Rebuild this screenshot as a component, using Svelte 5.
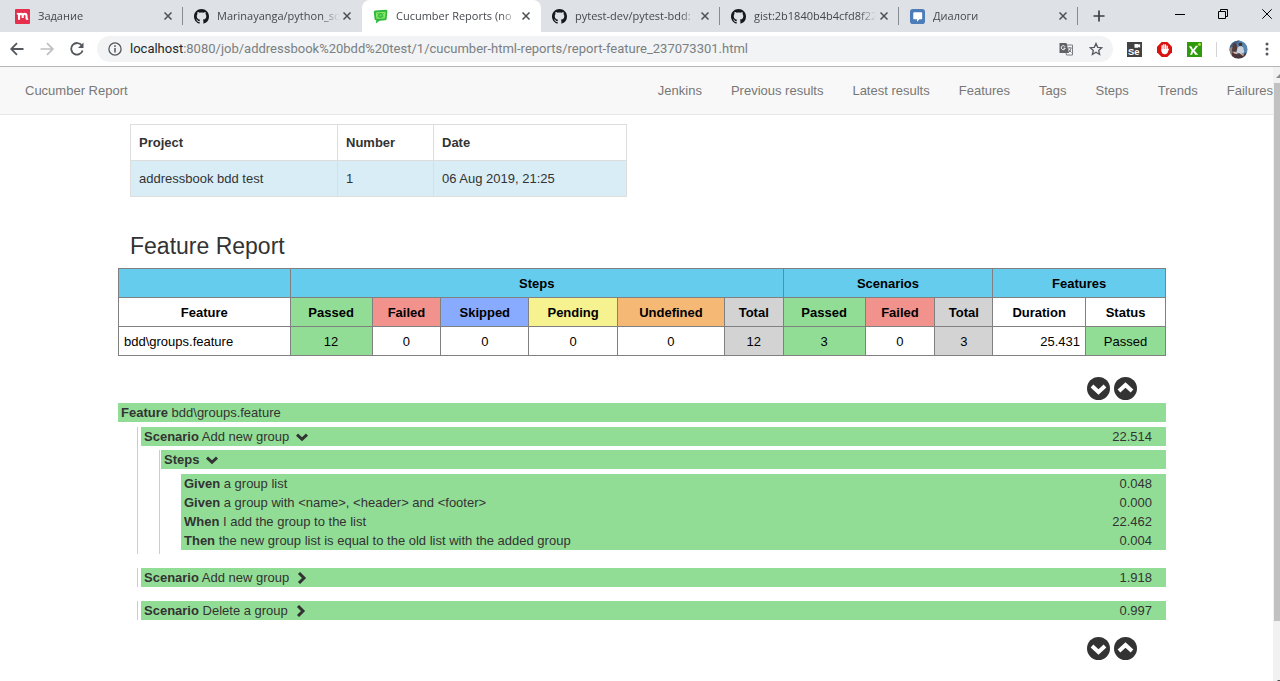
<script>
  const tabs = [
    { title: 'Задание', icon: 'miro' },
    { title: 'Marinayanga/python_sc', icon: 'github' },
    { title: 'Cucumber Reports (no', icon: 'cucumber', active: true },
    { title: 'pytest-dev/pytest-bdd:', icon: 'github' },
    { title: 'gist:2b1840b4b4cfd8f22', icon: 'github' },
    { title: 'Диалоги', icon: 'chat' }
  ];
  const links = ['Jenkins', 'Previous results', 'Latest results', 'Features', 'Tags', 'Steps', 'Trends', 'Failures'];
  const columns = [
    { label: 'Feature', value: 'bdd\\groups.feature', size: 172, align: 'left' },
    { label: 'Passed', value: '12', size: 82, head: 'passed', cell: 'passed' },
    { label: 'Failed', value: '0', size: 69, head: 'failed' },
    { label: 'Skipped', value: '0', size: 88, head: 'skipped' },
    { label: 'Pending', value: '0', size: 89, head: 'pending' },
    { label: 'Undefined', value: '0', size: 107, head: 'undefined' },
    { label: 'Total', value: '12', size: 59, head: 'total', cell: 'total' },
    { label: 'Passed', value: '3', size: 82, head: 'passed', cell: 'passed' },
    { label: 'Failed', value: '0', size: 70, head: 'failed' },
    { label: 'Total', value: '3', size: 58, head: 'total', cell: 'total' },
    { label: 'Duration', value: '25.431', size: 93, align: 'right' },
    { label: 'Status', value: 'Passed', size: 80, cell: 'passed' }
  ];
  const sum = columns.reduce((t, c) => t + c.size, 0);
  let scenarios = $state([
    {
      name: 'Add new group', time: '22.514', open: true, stepsOpen: true,
      steps: [
        ['Given', 'a group list', '0.048'],
        ['Given', 'a group with <name>, <header> and <footer>', '0.000'],
        ['When', 'I add the group to the list', '22.462'],
        ['Then', 'the new group list is equal to the old list with the added group', '0.004']
      ]
    },
    { name: 'Add new group', time: '1.918', open: false, stepsOpen: true, steps: [] },
    { name: 'Delete a group', time: '0.997', open: false, stepsOpen: true, steps: [] }
  ]);
  function setAll(open) {
    for (const s of scenarios) s.open = open;
  }
</script>

{#snippet chevron(open)}
  <svg class="chev" viewBox="0 0 12 12" aria-hidden="true">
    {#if open}
      <path d="M1 3.700 6 8.300 11 3.700" />
    {:else}
      <path d="M3 1 8 6 3 11" />
    {/if}
  </svg>
{/snippet}

{#snippet toggles()}
  <div class="toggles">
    <button aria-label="Expand all" onclick={() => setAll(true)}>
      <svg viewBox="0 0 23 23"><circle cx="11.5" cy="11.5" r="11.5" fill="#333" /><path d="M5 9 11.5 15 18 9" /></svg>
    </button>
    <button aria-label="Collapse all" onclick={() => setAll(false)}>
      <svg viewBox="0 0 23 23"><circle cx="11.5" cy="11.5" r="11.5" fill="#333" /><path d="M5 14 11.5 8 18 14" /></svg>
    </button>
  </div>
{/snippet}

<div class="window">
  <div class="strip">
    {#each tabs as tab}
      <div class="tab" class:active={tab.active}>
        {#if tab.icon === 'github'}
          <svg class="fav" viewBox="0 0 16 16"><path d="M8 0C3.58 0 0 3.58 0 8c0 3.54 2.29 6.53 5.47 7.59.4.07.55-.17.55-.38 0-.19-.01-.82-.01-1.49-2.01.37-2.53-.49-2.69-.94-.09-.23-.48-.94-.82-1.13-.28-.15-.68-.52-.01-.53.63-.01 1.08.58 1.23.82.72 1.21 1.87.87 2.33.66.07-.52.28-.87.51-1.07-1.78-.2-3.64-.89-3.64-3.95 0-.87.31-1.59.82-2.15-.08-.2-.36-1.02.08-2.12 0 0 .67-.21 2.2.82.64-.18 1.32-.27 2-.27s1.36.09 2 .27c1.53-1.04 2.2-.82 2.2-.82.44 1.1.16 1.92.08 2.12.51.56.82 1.27.82 2.15 0 3.07-1.87 3.75-3.65 3.95.29.25.54.73.54 1.48 0 1.07-.01 1.93-.01 2.2 0 .21.15.46.55.38A8.01 8.01 0 0 0 16 8c0-4.42-3.58-8-8-8z" fill="#15181c" /></svg>
        {:else if tab.icon === 'miro'}
          <svg class="fav" viewBox="0 0 16 16"><rect width="16" height="16" rx="1" fill="#e62e4d" /><path d="M2.200 5.500Q4.200 4.300 4.300 6.500V11.500M4.300 7.500Q4.500 5.200 6.300 5.200Q8.200 5.200 8.200 7.500V9.500M8.200 7.500Q8.500 5.200 10.300 5.200Q12.300 5.200 12.300 7.500V9.500Q12.300 11 14 10.300" fill="none" stroke="#fff" stroke-width="2.200" /></svg>
        {:else if tab.icon === 'cucumber'}
          <svg class="fav" viewBox="0 0 16 16"><path d="M2.500 1.500 14 .800Q15.500 1 15.300 2.500L14.500 11Q14 12 13 12L7 12.500 3 15.500 3.500 12 1.800 11.500.800 3Q.800 1.700 2.500 1.500Z" fill="#2db83c" /><path d="M3 3.500 13.500 3 12.800 10 3.500 10.500Z" fill="#8be868" /><circle cx="8" cy="6.700" r="2.800" fill="#36bd42" /><circle cx="8" cy="6.700" r="1.200" fill="#6fde56" /><path d="M4 4l1 1M12 4l-1 1M4 9l1-1M12 9l-1-1" stroke="#27b43c" /></svg>
        {:else}
          <svg class="fav" viewBox="0 0 16 16"><rect width="16" height="16" rx="3" fill="#4d7db8" /><path d="M4.500 3.500H12Q13 3.500 13 4.500V10Q13 11 12 11H10L7.500 13.500V11H4.500Q3.500 11 3.500 10V4.500Q3.500 3.500 4.500 3.500Z" fill="#fff" /></svg>
        {/if}
        <span class="title">{tab.title}</span>
        <button class="close" aria-label="Close tab"><svg viewBox="0 0 8 8"><path d="M.5.5 7.500 7.500M7.500.5.5 7.500" stroke="#4c4f54" stroke-width="1.500" /></svg></button>
      </div>
    {/each}
    <button class="plus" aria-label="New tab"><svg viewBox="0 0 12 12"><path d="M6 .5v11M.5 6h11" stroke="#3c4043" stroke-width="1.700" /></svg></button>
    <div class="controls">
      <button aria-label="Minimize"><svg viewBox="0 0 10 10"><path d="M0 5.500h10" stroke="#000" /></svg></button>
      <button aria-label="Restore"><svg viewBox="0 0 10 10"><path d="M.5 2.500h7v7h-7zM2.500 2.500v-2h7v7h-2" fill="none" stroke="#000" /></svg></button>
      <button aria-label="Close window"><svg viewBox="0 0 10 10"><path d="M.3.3l9.400 9.400M9.700.3.3 9.700" stroke="#000" /></svg></button>
    </div>
  </div>

  <div class="toolbar">
    <div class="history">
      <button aria-label="Back"><svg viewBox="0 0 14 14"><path d="M13.500 7H1.500M7 1.200 1.200 7 7 12.800" fill="none" stroke="#54585d" stroke-width="1.800" /></svg></button>
      <button aria-label="Forward"><svg viewBox="0 0 14 14"><path d="M.5 7h12M7 1.200 12.800 7 7 12.800" fill="none" stroke="#bcbec1" stroke-width="1.700" /></svg></button>
      <button aria-label="Reload"><svg viewBox="0 0 14 14"><path d="M11.800 3.500A5.800 5.800 0 1 0 12.600 8.500" fill="none" stroke="#54585d" stroke-width="1.800" /><path d="M13.500.5V6H8z" fill="#54585d" /></svg></button>
    </div>
    <div class="omnibox">
      <svg class="info" viewBox="0 0 14 14"><circle cx="7" cy="7" r="6.100" fill="none" stroke="#54585d" stroke-width="1.300" /><path d="M7 6v4.500M7 3.300v1.600" stroke="#54585d" stroke-width="1.500" /></svg>
      <span class="url"><b>localhost</b>:8080/job/addressbook%20bdd%20test/1/cucumber-html-reports/report-feature_237073301.html</span>
      <button aria-label="Translate"><svg viewBox="0 0 14 14"><path d="M5 3h8.500v10H7.500z" fill="#f5f6f7" stroke="#7a7d81" /><path d="M.5 1H7.500L10 11H.5z" fill="#5f6368" /><path d="M6 4.700A2 2 0 1 0 6.200 6.200H4.500" fill="none" stroke="#fff" /><path d="M8.800 6h4M10.800 5v1M12 6.500Q11.500 9 9.800 10.300M9.500 7.500l3 3" fill="none" stroke="#74777b" /></svg></button>
      <button aria-label="Bookmark"><svg viewBox="0 0 14 14"><path d="M7 1.500 8.700 5.300 12.800 5.700 9.700 8.400 10.600 12.500 7 10.300 3.400 12.500 4.300 8.400 1.200 5.700 5.300 5.300Z" fill="none" stroke="#54585d" stroke-width="1.300" /></svg></button>
    </div>
    <div class="extensions">
      <button aria-label="Selenium"><svg viewBox="0 0 16 16"><path d="M0 0h16v16H0z" fill="#424242" /><path d="M8 2h4v1l2-1v4l-2-1v1H8z" fill="#fff" /><text x="1" y="14" font-size="10" font-weight="700" fill="#fff">Se</text></svg></button>
      <button aria-label="Blocker"><svg viewBox="0 0 16 16"><path d="M5 0h6l5 5v6l-5 5H5l-5-5V5z" fill="#d9110f" /><path d="M5.500 9V4M7.300 8V2.800M9.100 8V3M10.900 9V4.500" stroke="#fff" stroke-width="1.400" stroke-linecap="round" /><path d="M4.800 7.500h6.800L13 7l-1.700 4.500Q10.500 13 9 13H7.500Q5.500 13 4.800 10.500z" fill="#fff" /></svg></button>
      <button aria-label="Katalon"><svg viewBox="0 0 16 16"><path d="M0 0h16v16H0z" fill="#2f9a0b" /><path d="M2 4.500h2.500L6.500 8 9.500 4h2.500L8 9l4 4.500H8.700L6.500 10.500 5.500 13.500H3.200L5 9z" fill="#fff" /><circle cx="13.300" cy="2.600" r="1.500" fill="#b3ec45" /></svg></button>
      <i></i>
      <button class="avatar" aria-label="Profile"><svg viewBox="0 0 20 20"><clipPath id="face"><circle cx="10" cy="10" r="9.500" /></clipPath><g clip-path="url(#face)"><path d="M0 0h20v20H0z" fill="#5785ae" /><path d="M0 3l7-3h5L7 6 0 9z" fill="#426384" /><path d="M0 9l4-2 3 2v11H0z" fill="#918485" /><path d="M4 5q2-4 4 0l1 4-2 4-4-1z" fill="#503a3b" /><path d="M9 8l3-2 3 2 1 5-4 2-4-2z" fill="#cbd2da" /><circle cx="12" cy="4.500" r="2" fill="#433333" /><path d="M3 13l5 2 3-1 3 2 4-3v7H3z" fill="#4b3538" /><path d="M5 12l3 1 1 2-4-1z" fill="#e0b6a5" /><path d="M12 15l4-1-1 3z" fill="#b9a29b" /></g></svg></button>
      <button class="menu" aria-label="Menu"><svg viewBox="0 0 4 14"><g fill="#54585d"><circle cx="2" cy="2" r="1.500" /><circle cx="2" cy="7" r="1.500" /><circle cx="2" cy="12" r="1.500" /></g></svg></button>
    </div>
  </div>

  <div class="viewport">
    <div class="page">
      <nav>
        <a class="brand" href="#top">Cucumber Report</a>
        <ul>
          {#each links as link}<li><a href="#top">{link}</a></li>{/each}
        </ul>
      </nav>

      <main>
        <table class="project">
          <thead><tr><th class="name">Project</th><th class="number">Number</th><th>Date</th></tr></thead>
          <tbody><tr><td>addressbook bdd test</td><td>1</td><td>06 Aug 2019, 21:25</td></tr></tbody>
        </table>

        <h2>Feature Report</h2>

        <table class="stats">
          <colgroup>
            {#each columns as c}<col style:width="{(c.size / sum) * 100}%" />{/each}
          </colgroup>
          <thead>
            <tr class="groups"><th></th><th colspan="6">Steps</th><th colspan="3">Scenarios</th><th colspan="2">Features</th></tr>
            <tr>{#each columns as c}<th class={c.head}>{c.label}</th>{/each}</tr>
          </thead>
          <tbody>
            <tr>{#each columns as c}<td class={[c.cell, c.align]}>{c.value}</td>{/each}</tr>
          </tbody>
        </table>

        {@render toggles()}

        <div class="row feature"><span><strong>Feature</strong> bdd\groups.feature</span></div>
        {#each scenarios as s}
          <section class="scenario">
            <div class="row">
              <button class="label" aria-expanded={s.open} onclick={() => (s.open = !s.open)}><span><strong>Scenario</strong> {s.name}</span>{@render chevron(s.open)}</button>
              <span>{s.time}</span>
            </div>
            {#if s.open}
              <div class="steps">
                <div class="row">
                  <button class="label" aria-expanded={s.stepsOpen} onclick={() => (s.stepsOpen = !s.stepsOpen)}><strong>Steps</strong>{@render chevron(s.stepsOpen)}</button>
                </div>
                {#if s.stepsOpen}
                  <div class="list">
                    {#each s.steps as [keyword, text, time]}
                      <div class="row"><span><strong>{keyword}</strong> {text}</span><span>{time}</span></div>
                    {/each}
                  </div>
                {/if}
              </div>
            {/if}
          </section>
        {/each}

        {@render toggles()}
      </main>
    </div>
    <div class="scroll">
      <svg viewBox="0 0 7 16"><path d="M3 11 7 7v4z" fill="#8a8a8a" /></svg>
      <div class="thumb"></div>
      <svg viewBox="0 0 7 16"><path d="M4 13h3v3z" fill="#505050" /></svg>
    </div>
  </div>
</div>

<style>
  :global(body) { margin: 0; background: #fff; }
  * { box-sizing: border-box; }
  svg { display: block; }
  button { border: 0; padding: 0; margin: 0; background: none; font: inherit; color: inherit; display: flex; align-items: center; justify-content: center; flex: none; }
  .window { min-height: 100vh; display: flex; flex-direction: column; font: 13px/19px "Liberation Sans", Arial, sans-serif; color: #333; }

  .strip { height: 32px; flex: none; display: flex; padding-left: 4px; background: #dee1e6; font: 11px/16px "Open Sans", "Noto Sans", sans-serif; color: #45484d; }
  .tab { flex: 0 1 179px; min-width: 0; display: flex; align-items: center; padding: 0 11px; position: relative; }
  .tab::after { content: ""; position: absolute; right: 0; top: 7px; height: 18px; width: 1px; background: #888b90; }
  .tab:has(+ .active)::after, .active::after { display: none; }
  .active { background: #fff; border-radius: 8px 8px 0 0; }
  .fav { width: 15px; height: 15px; flex: none; }
  .title { flex: 1; min-width: 0; margin: 0 4px 0 8px; overflow: hidden; white-space: nowrap; mask-image: linear-gradient(90deg, #000 86%, transparent); }
  .close svg { width: 8px; height: 8px; }
  .plus { width: 42px; }
  .plus svg { width: 12px; height: 12px; }
  .controls { margin-left: auto; display: flex; height: 27px; }
  .controls button { width: 43px; }
  .controls button:last-child { width: 36px; padding-left: 10px; }
  .controls svg { width: 10px; height: 10px; }

  .toolbar { height: 35px; flex: none; display: flex; align-items: center; border-bottom: 1px solid #b5b5b5; background: #fff; }
  .history { display: flex; padding: 0 5px 0 2px; }
  .history button { width: 30px; }
  .history svg { width: 14px; height: 14px; }
  .omnibox { flex: 1; min-width: 0; height: 26px; border-radius: 13px; background: #f1f3f4; display: flex; align-items: center; padding: 0 2px 0 11px; }
  .info { width: 14px; height: 14px; flex: none; }
  .url { flex: 1; min-width: 0; padding-left: 8px; overflow: hidden; white-space: nowrap; font: 13px/20px Roboto, "Noto Sans", sans-serif; color: #7b7f83; }
  .url b { font-weight: 400; color: #24272b; }
  .omnibox button { width: 30px; }
  .omnibox button svg { width: 14px; height: 14px; }
  .extensions { display: flex; align-items: center; padding-left: 6px; }
  .extensions button { width: 30px; }
  .extensions svg { width: 15px; height: 15px; }
  .extensions text { font-family: "Liberation Sans", sans-serif; }
  .extensions i { width: 1px; height: 15px; margin: 0 5px 0 7px; background: #d2d4d7; }
  .extensions .avatar { width: 32px; }
  .extensions .avatar svg { width: 19px; height: 19px; }
  .extensions .menu { width: 26px; }
  .extensions .menu svg { width: 4px; height: 14px; }

  .viewport { flex: 1; display: flex; }
  .page { flex: 1; min-width: 0; overflow: hidden; }
  nav { height: 48px; display: flex; align-items: center; padding-left: 25px; background: #f8f8f8; border-bottom: 1px solid #e7e7e7; white-space: nowrap; }
  nav a { color: #777; text-decoration: none; }
  nav ul { display: flex; gap: 29px; list-style: none; margin: 0 0 0 auto; padding: 0; }
  main { padding: 9px 107px 20px 118px; }
  table { border-collapse: collapse; }
  .project { width: 497px; max-width: 100%; margin-left: 12px; table-layout: fixed; }
  .project th, .project td { height: 36px; padding: 0 8px; border: 1px solid #ddd; text-align: left; }
  .project td { background: #d9edf7; }
  .name { width: 207px; }
  .number { width: 96px; }
  h2 { margin: 36px 0 9px 12px; font-size: 23px; line-height: 26px; font-weight: 400; }
  .stats { width: 100%; margin-bottom: 4px; table-layout: fixed; color: #000; }
  .stats th, .stats td { height: 29px; padding: 0 5px; border: 1px solid #808080; text-align: center; }
  .stats .left { text-align: left; }
  .stats .right { text-align: right; }
  .groups { background: #66ccee; }
  .passed { background: #92dd96; }
  .failed { background: #f2928c; }
  .skipped { background: #88aaff; }
  .pending { background: #f5f28f; }
  .undefined { background: #f5b975; }
  .total { background: #d3d3d3; }

  .toggles { display: flex; justify-content: flex-end; gap: 4px; padding: 17px 29px 3px 0; }
  .toggles svg { width: 23px; height: 23px; }
  .toggles path { fill: none; stroke: #fff; stroke-width: 4; }
  .row { display: flex; justify-content: space-between; padding: 0 14px 0 3px; background: #92dd96; }
  .chev { width: 12px; height: 12px; margin-left: 7px; }
  .chev path { fill: none; stroke: #333; stroke-width: 3; }
  .scenario { margin: 0 0 14px 19px; padding-left: 3px; border-left: 1px solid #ccc; }
  .scenario:last-of-type { margin-bottom: 0; }
  .feature { margin-bottom: 5px; }
  .steps { margin: 4px 0 0 18px; padding: 0 0 4px 1px; border-left: 1px solid #ccc; }
  .list { margin: 5px 0 0 20px; }

  .scroll { width: 7px; flex: none; display: flex; flex-direction: column; background: #f1f1f1; }
  .scroll svg { width: 7px; height: 16px; flex: none; }
  .thumb { flex: 0 0 calc(100% - 78px); margin: 0 0 auto 1px; background: #c1c1c1; }
</style>
